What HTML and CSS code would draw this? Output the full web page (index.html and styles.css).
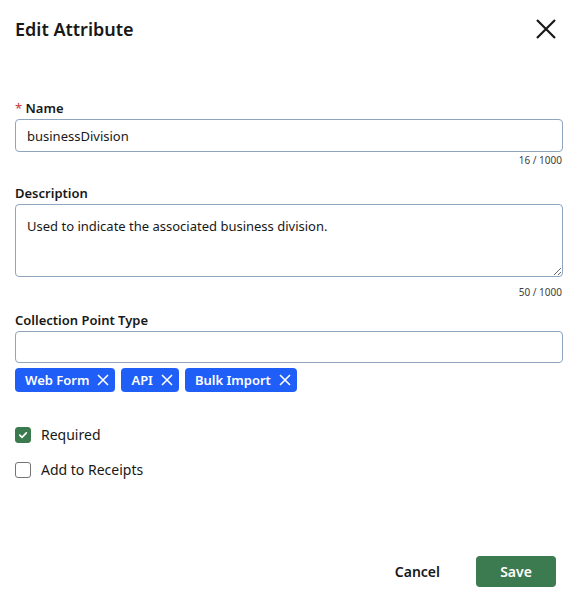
FILE: index.html
```html
<!DOCTYPE html>
<html>
<head>
<meta charset="utf-8">
<link rel="stylesheet" href="styles.css">
</head>
<body>
<div class="dialog">
  <header class="header">
    <h1 class="title">Edit Attribute</h1>
    <button class="close" aria-label="Close">
      <svg width="20" height="20" viewBox="0 0 20 20"><path d="M1 1 L19 19 M19 1 L1 19" stroke="#181818" stroke-width="2.2" fill="none"/></svg>
    </button>
  </header>
  <div class="form">
    <label class="label"><span class="req">*</span> Name</label>
    <input class="input" type="text" value="businessDivision">
    <div class="counter">16 / 1000</div>

    <label class="label label-desc">Description</label>
    <textarea class="textarea">Used to indicate the associated business division.</textarea>
    <div class="counter counter-desc">50 / 1000</div>

    <label class="label label-cpt">Collection Point Type</label>
    <input class="input input-cpt" type="text" value="">
    <div class="pills">
      <span class="pill">Web Form <svg class="pill-x" width="12" height="12" viewBox="0 0 12 12"><path d="M1 1 L11 11 M11 1 L1 11" stroke="#fff" stroke-width="1.6" fill="none"/></svg></span>
      <span class="pill">API <svg class="pill-x" width="12" height="12" viewBox="0 0 12 12"><path d="M1 1 L11 11 M11 1 L1 11" stroke="#fff" stroke-width="1.6" fill="none"/></svg></span>
      <span class="pill">Bulk Import <svg class="pill-x" width="12" height="12" viewBox="0 0 12 12"><path d="M1 1 L11 11 M11 1 L1 11" stroke="#fff" stroke-width="1.6" fill="none"/></svg></span>
    </div>

    <div class="check-row check-first">
      <span class="box box-on"><svg width="10" height="10" viewBox="0 0 10 10"><path d="M1.8 5.2 L4 7.3 L8.3 2.8" stroke="#fff" stroke-width="1.7" fill="none" stroke-linecap="round" stroke-linejoin="round"/></svg></span>
      <span class="check-label">Required</span>
    </div>
    <div class="check-row check-second">
      <span class="box"></span>
      <span class="check-label">Add to Receipts</span>
    </div>
  </div>
  <footer class="footer">
    <button class="btn-cancel">Cancel</button>
    <button class="btn-save">Save</button>
  </footer>
</div>
</body>
</html>
```
FILE: styles.css
```css
* { box-sizing: border-box; }
html, body { margin: 0; padding: 0; background: #fff; }
body {
  font-family: "Noto Sans", "Open Sans", sans-serif;
  color: #181818;
  width: 582px;
  height: 605px;
  overflow: hidden;
}
.dialog { padding: 0 19px 0 15px; }
.header {
  height: 58px;
  display: flex;
  align-items: center;
  justify-content: space-between;
  padding-right: 7px;
}
.title { margin: 0; font-size: 18px; font-weight: 600; line-height: 24px; }
.close {
  border: none; background: none; padding: 0; width: 20px; height: 20px;
  display: flex; align-items: center; justify-content: center; cursor: pointer;
}
.form { padding-top: 41px; }
.label {
  display: block;
  font-size: 13px;
  font-weight: 600;
  line-height: 18px;
  margin-bottom: 2px;
}
.req { color: #c23934; font-weight: 400; }
.input, .textarea {
  display: block;
  width: 100%;
  border: 1px solid #8ea4bf;
  border-radius: 4px;
  font-family: inherit;
  font-size: 13px;
  color: #181818;
  padding: 0 11px;
  background: #fff;
  outline: none;
}
.input { height: 33px; }
.input-cpt { height: 32px; }
.textarea {
  height: 73px;
  padding: 12px 11px;
  line-height: 18px;
  resize: vertical;
}
.counter {
  text-align: right;
  font-size: 10px;
  line-height: 14px;
  color: #3e3e3c;
  margin-top: 1px;
  padding-right: 1px;
}
.counter-desc { margin-top: 8px; }
.label-desc { margin-top: 17px; }
.label-cpt { margin-top: 12px; }
.pills { display: flex; gap: 6px; margin-top: 5px; }
.pill {
  display: inline-flex;
  align-items: center;
  gap: 8px;
  height: 24px;
  padding: 0 6px 0 10px;
  background: #1f5ef7;
  color: #fff;
  font-size: 13px;
  font-weight: 600;
  border-radius: 4px;
}
.pill-x { display: block; }
.check-row { display: flex; align-items: center; height: 20px; gap: 10px; }
.check-first { margin-top: 33px; }
.check-second { margin-top: 15px; }
.box {
  width: 16px; height: 16px;
  border: 1px solid #747474;
  border-radius: 3px;
  display: flex; align-items: center; justify-content: center;
  background: #fff;
}
.box-on { background: #3b7a4e; border-color: #3b7a4e; }
.check-label { font-size: 14px; line-height: 20px; }
.footer {
  display: flex;
  justify-content: flex-end;
  align-items: center;
  gap: 36px;
  margin-top: 76px;
  padding-right: 7px;
}
.btn-cancel {
  border: none; background: none; padding: 0;
  font-family: inherit; font-size: 14px; font-weight: 600; color: #181818;
}
.btn-save {
  width: 80px; height: 31px;
  border: none; border-radius: 4px;
  background: #3c7a4f; color: #fff;
  font-family: inherit; font-size: 14px; font-weight: 600;
}
```
